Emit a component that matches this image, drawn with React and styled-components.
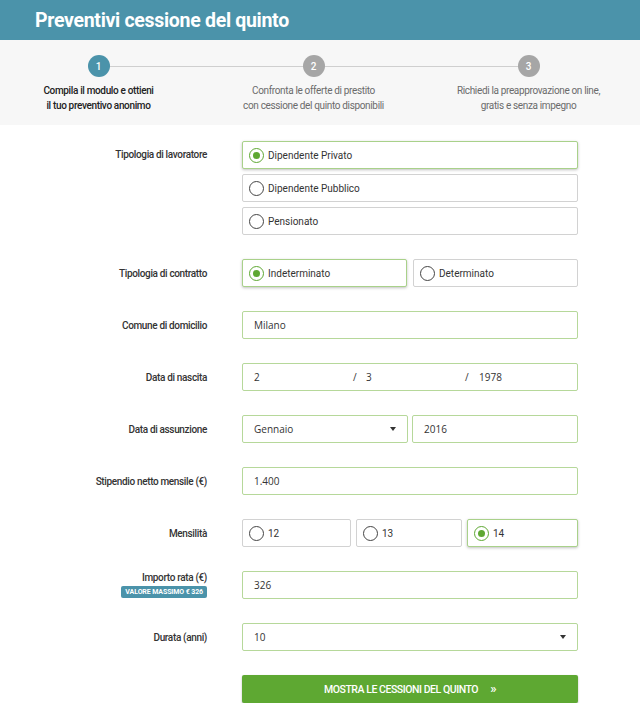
import React from 'react';
import styled, { createGlobalStyle, css } from 'styled-components';

const Global = createGlobalStyle`
  body {
    margin: 0;
    background: #fff;
    font-family: Roboto, "Liberation Sans", sans-serif;
    color: #333;
  }
`;

const Header = styled.div`
  height: 40px;
  background: #4b93aa;
  display: flex;
  align-items: center;
  padding-left: 35px;
`;

const Title = styled.h1`
  margin: 0;
  color: #fff;
  font-size: 19.5px;
  font-weight: 700;
  letter-spacing: -0.3px;
`;

const StepsBar = styled.div`
  background: #f7f7f7;
  height: 85px;
  overflow: hidden;
`;

const Steps = styled.div`
  display: grid;
  grid-template-columns: repeat(3, 215px);
  margin-left: -9px;
  padding-top: 15px;
`;

const Step = styled.div`
  position: relative;
  display: flex;
  flex-direction: column;
  align-items: center;

  &:not(:last-child)::after {
    content: '';
    position: absolute;
    top: 11px;
    left: 50%;
    width: 215px;
    height: 1px;
    background: #cfcfcf;
  }
`;

const Circle = styled.div`
  position: relative;
  z-index: 1;
  width: 22px;
  height: 22px;
  border-radius: 50%;
  background: ${p => (p.$active ? '#4b93aa' : '#a6a6a6')};
  color: #fff;
  font-size: 10px;
  font-weight: 500;
  display: flex;
  align-items: center;
  justify-content: center;
`;

const StepText = styled.div`
  margin-top: 6px;
  text-align: center;
  font-size: 10px;
  line-height: 15px;
  letter-spacing: -0.35px;
  color: ${p => (p.$active ? '#222' : '#6b6b6b')};
  font-weight: ${p => (p.$active ? 500 : 400)};
`;

const Form = styled.div`
  padding-top: 16px;
  display: flex;
  flex-direction: column;
  gap: 24px;
`;

const Row = styled.div`
  display: grid;
  grid-template-columns: 207px 336px;
  column-gap: 35px;
  align-items: ${p => (p.$top ? 'start' : 'center')};
`;

const Label = styled.div`
  text-align: right;
  font-size: 10px;
  font-weight: 500;
  color: #333;
  letter-spacing: -0.35px;
  padding-top: ${p => (p.$top ? '8px' : '0')};
  display: flex;
  flex-direction: column;
  align-items: flex-end;
  gap: 3px;
`;

const Badge = styled.span`
  background: #4b93aa;
  color: #fff;
  font-size: 7px;
  font-weight: 700;
  letter-spacing: -0.1px;
  padding: 1px 4px;
  border-radius: 2px;
  line-height: 10px;
`;

const Stack = styled.div`
  display: flex;
  flex-direction: column;
  gap: 5px;
`;

const Split = styled.div`
  display: grid;
  grid-template-columns: ${p => p.$cols};
  gap: ${p => p.$gap || '5px'};
`;

const boxBase = css`
  box-sizing: border-box;
  height: 28px;
  background: #fff;
  border-radius: 2px;
  display: flex;
  align-items: center;
  font-size: 10px;
  color: #333;
`;

const Option = styled.div`
  ${boxBase}
  padding-left: 6px;
  gap: 4px;
  border: 1px solid ${p => (p.$checked ? '#a9d18a' : '#d2d2d2')};
  box-shadow: ${p => (p.$checked ? '0 1px 3px rgba(0,0,0,0.25)' : 'none')};
`;

const Radio = styled.span`
  box-sizing: border-box;
  width: 15px;
  height: 15px;
  border-radius: 50%;
  border: 1.5px solid ${p => (p.$checked ? '#5ea832' : '#444')};
  display: flex;
  align-items: center;
  justify-content: center;

  &::after {
    content: '';
    width: 7px;
    height: 7px;
    border-radius: 50%;
    background: ${p => (p.$checked ? '#5ea832' : 'transparent')};
  }
`;

const Field = styled.div`
  ${boxBase}
  padding: 0 11px 0 11px;
  border: 1px solid #b6d89a;
  font-family: "Open Sans", "Liberation Sans", sans-serif;
  font-size: 10px;
  justify-content: space-between;
`;

const DateField = styled(Field)`
  justify-content: flex-start;
`;

const DatePart = styled.span`
  width: ${p => p.$w}px;
`;

const Caret = styled.span`
  width: 0;
  height: 0;
  border-left: 3.5px solid transparent;
  border-right: 3.5px solid transparent;
  border-top: 4px solid #333;
`;

const Button = styled.button`
  box-sizing: border-box;
  width: 336px;
  height: 28px;
  border: none;
  border-radius: 2px;
  background: #5ea832;
  box-shadow: 0 1px 2px rgba(0,0,0,0.3);
  color: #fff;
  font-family: Roboto, sans-serif;
  font-size: 10.5px;
  font-weight: 500;
  letter-spacing: -0.45px;
  display: flex;
  align-items: center;
  justify-content: center;
  gap: 12px;
`;

const Chevrons = styled.span`
  font-size: 13px;
  line-height: 1;
  margin-top: -2px;
`;

const Choice = ({ checked, children }) => (
  <Option $checked={checked}>
    <Radio $checked={checked} />
    {children}
  </Option>
);

const steps = [
  ['Compila il modulo e ottieni', 'il tuo preventivo anonimo'],
  ['Confronta le offerte di prestito', 'con cessione del quinto disponibili'],
  ['Richiedi la preapprovazione on line,', 'gratis e senza impegno'],
];

export default function App() {
  return (
    <>
      <Global />
      <Header>
        <Title>Preventivi cessione del quinto</Title>
      </Header>
      <StepsBar>
        <Steps>
          {steps.map((s, i) => (
            <Step key={i}>
              <Circle $active={i === 0}>{i + 1}</Circle>
              <StepText $active={i === 0}>
                {s[0]}
                <br />
                {s[1]}
              </StepText>
            </Step>
          ))}
        </Steps>
      </StepsBar>
      <Form>
        <Row $top>
          <Label $top>Tipologia di lavoratore</Label>
          <Stack>
            <Choice checked>Dipendente Privato</Choice>
            <Choice>Dipendente Pubblico</Choice>
            <Choice>Pensionato</Choice>
          </Stack>
        </Row>
        <Row>
          <Label>Tipologia di contratto</Label>
          <Split $cols="1fr 1fr" $gap="6px">
            <Choice checked>Indeterminato</Choice>
            <Choice>Determinato</Choice>
          </Split>
        </Row>
        <Row>
          <Label>Comune di domicilio</Label>
          <Field>Milano</Field>
        </Row>
        <Row>
          <Label>Data di nascita</Label>
          <DateField>
            <DatePart $w={99}>2</DatePart>
            <DatePart $w={13}>/</DatePart>
            <DatePart $w={99}>3</DatePart>
            <DatePart $w={14}>/</DatePart>
            <span>1978</span>
          </DateField>
        </Row>
        <Row>
          <Label>Data di assunzione</Label>
          <Split $cols="166px 1fr" $gap="4px">
            <Field>
              Gennaio
              <Caret />
            </Field>
            <Field>2016</Field>
          </Split>
        </Row>
        <Row>
          <Label>Stipendio netto mensile (€)</Label>
          <Field>1.400</Field>
        </Row>
        <Row>
          <Label>Mensilità</Label>
          <Split $cols="109px 106px 111px" $gap="5px">
            <Choice>12</Choice>
            <Choice>13</Choice>
            <Choice checked>14</Choice>
          </Split>
        </Row>
        <Row>
          <Label>
            Importo rata (€)
            <Badge>VALORE MASSIMO € 326</Badge>
          </Label>
          <Field>326</Field>
        </Row>
        <Row>
          <Label>Durata (anni)</Label>
          <Field>
            10
            <Caret />
          </Field>
        </Row>
        <Row>
          <span />
          <Button>
            MOSTRA LE CESSIONI DEL QUINTO
            <Chevrons>»</Chevrons>
          </Button>
        </Row>
      </Form>
    </>
  );
}
